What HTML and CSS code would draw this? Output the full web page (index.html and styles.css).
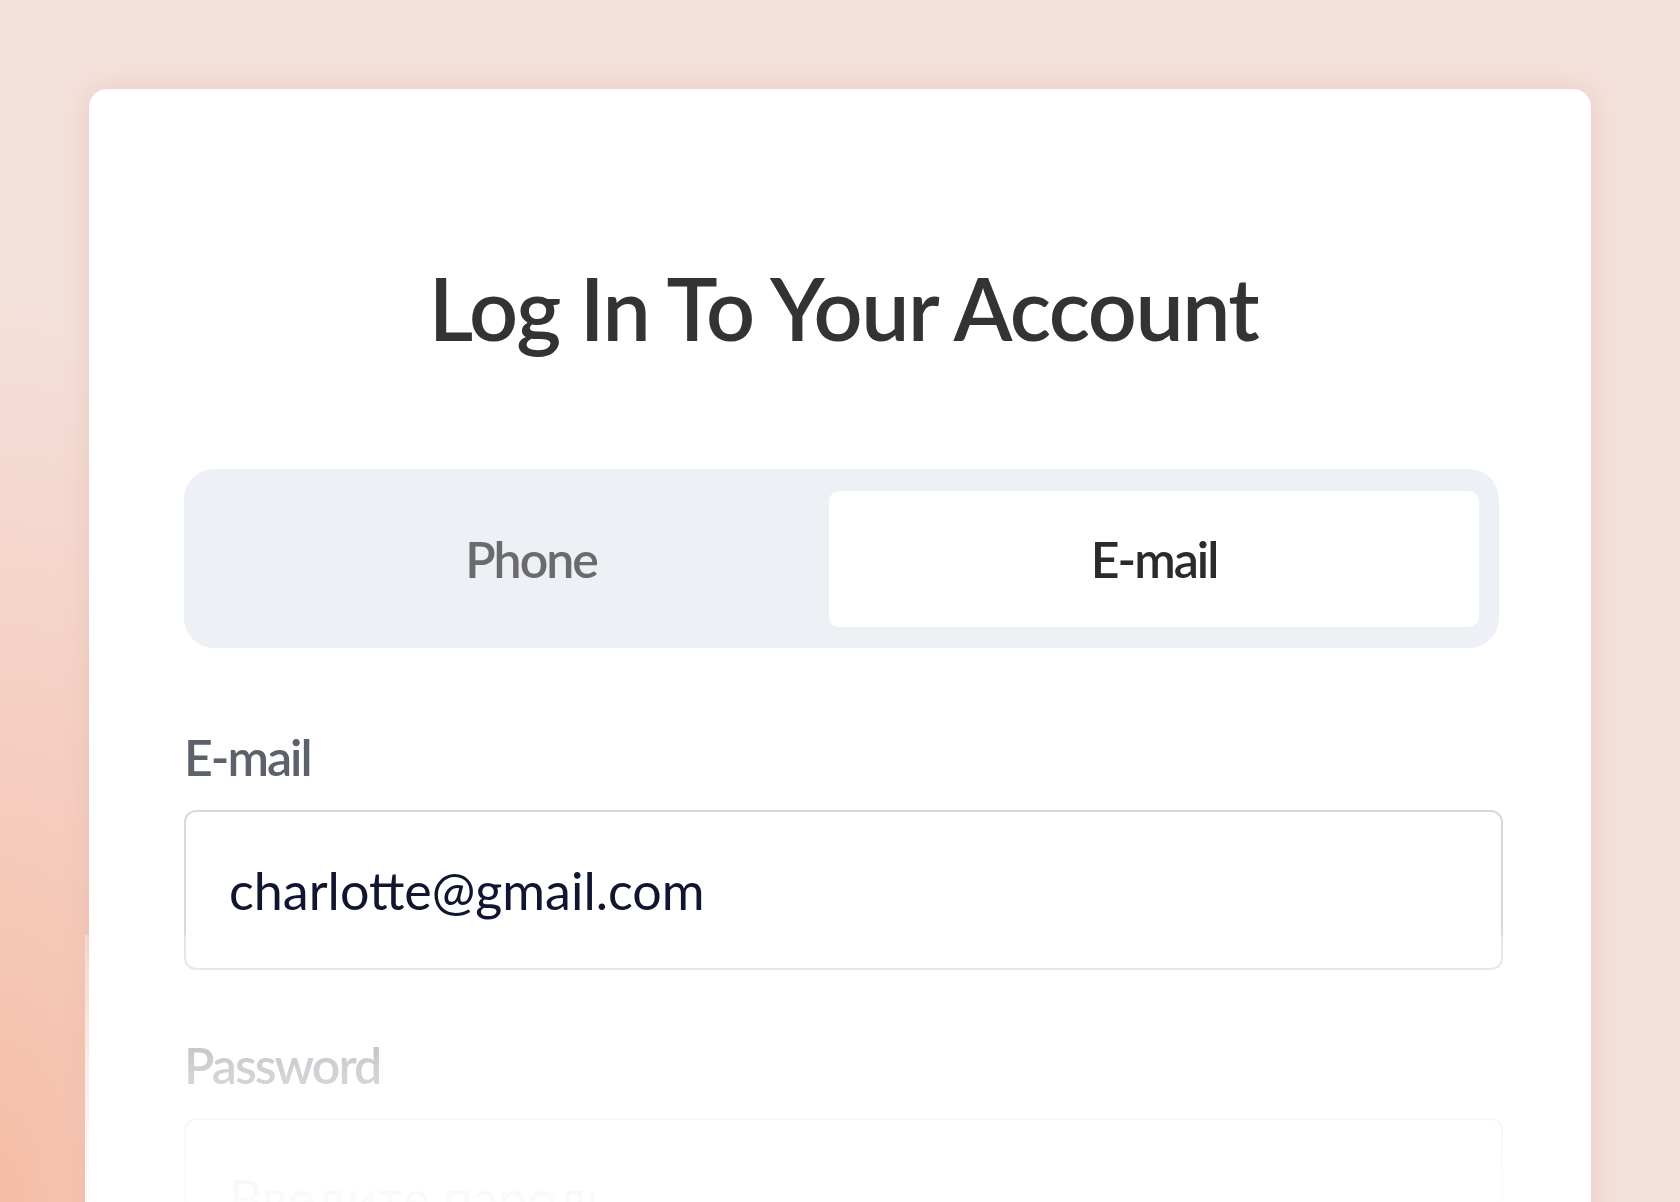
FILE: index.html
```html
<!DOCTYPE html>
<html lang="en">
<head>
    <meta charset="UTF-8">
    <meta name="viewport" content="width=device-width, initial-scale=1.0">
    <title>Log In</title>
    <link rel="stylesheet" href="styles.css">
</head>
<body>
    <div class="page">
        <div class="card">
            <h1 class="title">Log In To Your Account</h1>

            <div class="tabs">
                <button class="tab tab-phone">Phone</button>
                <button class="tab active">E-mail</button>
            </div>

            <div class="field">
                <label for="email">E-mail</label>
                <input type="text" id="email" value="charlotte@gmail.com">
            </div>

            <div class="field">
                <label for="password">Password</label>
                <input type="password" id="password" placeholder="Введите пароль">
            </div>
        </div>
        <div class="fade"></div>
    </div>
</body>
</html>
```

FILE: styles.css
```css
html, body {
    margin: 0;
    height: 100%;
    overflow: hidden;
}
body {
    font-family: Lato, "Noto Sans", sans-serif;
    background-color: #f4e0da;
    background-image: radial-gradient(ellipse 420px 900px at 0% 100%, #f6bca6 0%, rgba(244, 224, 218, 0) 100%);
}
.page {
    position: relative;
    height: 100%;
    padding: 89px 89px 0 89px;
    box-sizing: border-box;
}
.card {
    height: 1400px;
    padding: 176px 88px 0 95px;
    box-sizing: border-box;
    background: white;
    border-radius: 18px;
    box-shadow: 0 0 24px rgba(214, 170, 158, 0.35);
}
.title {
    margin: 0;
    text-align: center;
    font-size: 86px;
    line-height: 1;
    font-weight: 600;
    color: #333333;
    letter-spacing: -1.5px;
}
.tabs {
    display: grid;
    grid-template-columns: 1fr 650px;
    margin: 118px 4px 0 0;
    padding: 22px 20px 21px 20px;
    height: 179px;
    box-sizing: border-box;
    background: #edf0f5;
    border-radius: 30px;
}
.tab {
    display: flex;
    align-items: center;
    justify-content: center;
    border: none;
    background: transparent;
    font-family: inherit;
    font-size: 50px;
    line-height: 1;
    font-weight: 600;
    letter-spacing: -2px;
    color: #6b6b6e;
    padding: 0;
    cursor: pointer;
}
.tab-phone {
    padding-left: 29px;
}
.tab.active {
    background: white;
    color: #2b2b2b;
    border-radius: 10px;
}
.field {
    margin-top: 84px;
}
.field + .field {
    margin-top: 70px;
}
label {
    display: block;
    margin-bottom: 28px;
    font-size: 50px;
    line-height: 1;
    font-weight: 600;
    letter-spacing: -2px;
    color: #5d616b;
}
input {
    display: block;
    width: 100%;
    height: 160px;
    box-sizing: border-box;
    padding: 0 40px 0 43px;
    border: 2px solid #d7d9df;
    border-radius: 12px;
    font-family: inherit;
    font-size: 52px;
    line-height: 1;
    color: #101630;
    background: white;
    outline: none;
}
input::placeholder {
    color: #a9acb4;
}
.fade {
    position: absolute;
    left: 85px;
    right: 89px;
    top: 935px;
    bottom: 0;
    background: linear-gradient(rgba(255, 255, 255, 0.3) 0%, rgba(255, 255, 255, 0.7) 49%, rgba(255, 255, 255, 0.95) 100%);
}
```
